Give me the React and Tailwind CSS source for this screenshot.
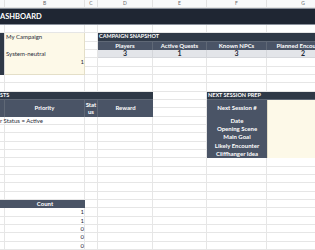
import React from "react"

const COLS = ["A", "B", "C", "D", "E", "F", "G"]
const ROWS = 30

const snapshot = [
  { label: "Players", value: 3 },
  { label: "Active Quests", value: 1 },
  { label: "Known NPCs", value: 3 },
  { label: "Planned Encounters", value: 2 },
]

const prep = ["Date", "Opening Scene", "Main Goal", "Likely Encounter", "Cliffhanger Idea"]

const counts = [1, 1, 0, 0, 0]

export default function App() {
  // background grid cells (rows 2..30)
  const cells = []
  for (let r = 2; r <= ROWS; r++) {
    for (let c = 1; c <= COLS.length; c++) {
      cells.push(
        <div
          key={`${r}-${c}`}
          className="border-r border-b border-[#e6e6e6]"
          style={{ gridRow: r, gridColumn: c }}
        />
      )
    }
  }

  return (
    <div className="w-[315px] h-[250px] overflow-hidden bg-white">
      <div className="grid w-[340px] grid-cols-[5px_80px_13px_55px_54px_60px_73px] grid-rows-[repeat(30,8.333px)] font-[family-name:Lato,sans-serif] text-[6px] leading-none text-[#1f2937]">
        {/* column letters */}
        {COLS.map((c, i) => (
          <div
            key={c}
            className="flex items-center justify-center border-r border-b border-[#e2e2e2] bg-[#f8f9fa] text-[5px] text-[#6b6b6b]"
            style={{ gridRow: 1, gridColumn: i + 1 }}
          >
            {i === 0 ? "" : c}
          </div>
        ))}

        {cells}

        {/* Title */}
        <div className="col-start-1 col-span-7 row-start-2 row-span-2 flex items-center border-y border-[#8a919c] bg-[#1f2633] text-[7.5px] font-bold text-white">
          ASHBOARD
        </div>

        {/* Campaign info */}
        <div className="col-start-1 row-start-5 row-span-5 border-r border-[#d8d8d8] bg-[#2f3947]" />
        <div className="col-start-2 row-start-5 row-span-5 border-b border-r border-[#e4dfc8] bg-[#fdf9e8]" />
        <div className="col-start-2 row-start-5 flex items-center pl-px">My Campaign</div>
        <div className="col-start-2 row-start-7 flex items-center pl-px">System-neutral</div>
        <div className="col-start-2 row-start-8 flex items-center justify-end pr-px">1</div>

        {/* Campaign snapshot */}
        <div className="col-start-4 col-span-4 row-start-5 flex items-center border-b border-[#5f6876] bg-[#2f3947] pl-px text-[5.5px] font-bold text-white">
          CAMPAIGN SNAPSHOT
        </div>
        {snapshot.map((s, i) => (
          <div
            key={s.label}
            className="row-start-6 flex items-center justify-center overflow-hidden whitespace-nowrap border-r border-[#5f6876] bg-[#4a5466] font-bold text-white"
            style={{ gridColumn: i + 4 }}
          >
            {s.label}
          </div>
        ))}
        {snapshot.map((s, i) => (
          <div
            key={s.label + "v"}
            className="row-start-7 flex items-center justify-center border-r border-b border-[#d4d6da] bg-[#e3e5e9] text-[7px] font-bold"
            style={{ gridColumn: i + 4 }}
          >
            {s.value}
          </div>
        ))}

        {/* Active quests */}
        <div className="col-start-1 col-span-4 row-start-12 flex items-center border-b border-[#5f6876] bg-[#2f3947] text-[5.5px] font-bold text-white">
          STS
        </div>
        <div className="col-start-1 row-start-13 row-span-2 border-r border-[#5f6876] bg-[#4a5466]" />
        <div className="col-start-2 row-start-13 row-span-2 flex items-center justify-center border-r border-[#5f6876] bg-[#4a5466] font-bold text-white">
          Priority
        </div>
        <div className="col-start-3 row-start-13 row-span-2 flex flex-col items-center justify-center gap-[1.5px] border-r border-[#5f6876] bg-[#4a5466] font-bold text-white">
          <span>Stat</span>
          <span>us</span>
        </div>
        <div className="col-start-4 row-start-13 row-span-2 flex items-center justify-center bg-[#4a5466] font-bold text-white">
          Reward
        </div>
        <div className="col-start-1 col-span-3 row-start-15 flex items-center whitespace-nowrap">
          r Status = Active
        </div>

        {/* Next session prep */}
        <div className="col-start-6 col-span-2 row-start-12 flex items-center border-b border-[#5f6876] bg-[#2f3947] pl-px text-[5.5px] font-bold text-white">
          NEXT SESSION PREP
        </div>
        <div className="col-start-6 row-start-13 row-span-7 bg-[#4a5466]" />
        <div className="col-start-6 row-start-13 row-span-2 flex items-center justify-center font-bold text-white">
          Next Session #
        </div>
        {prep.map((p, i) => (
          <div
            key={p}
            className="col-start-6 flex items-center justify-center font-bold text-white"
            style={{ gridRow: i + 15 }}
          >
            {p}
          </div>
        ))}
        <div className="col-start-7 row-start-13 row-span-7 border-l border-[#e4dfc8] bg-[#fdf9e8]" />

        {/* Counts */}
        <div className="col-start-1 row-start-25 bg-[#4a5466]" />
        <div className="col-start-2 row-start-25 flex items-center justify-center bg-[#4a5466] font-bold text-white">
          Count
        </div>
        {counts.map((n, i) => (
          <div
            key={i}
            className="col-start-2 flex items-center justify-end pr-px"
            style={{ gridRow: i + 26 }}
          >
            {n}
          </div>
        ))}
      </div>
    </div>
  )
}
